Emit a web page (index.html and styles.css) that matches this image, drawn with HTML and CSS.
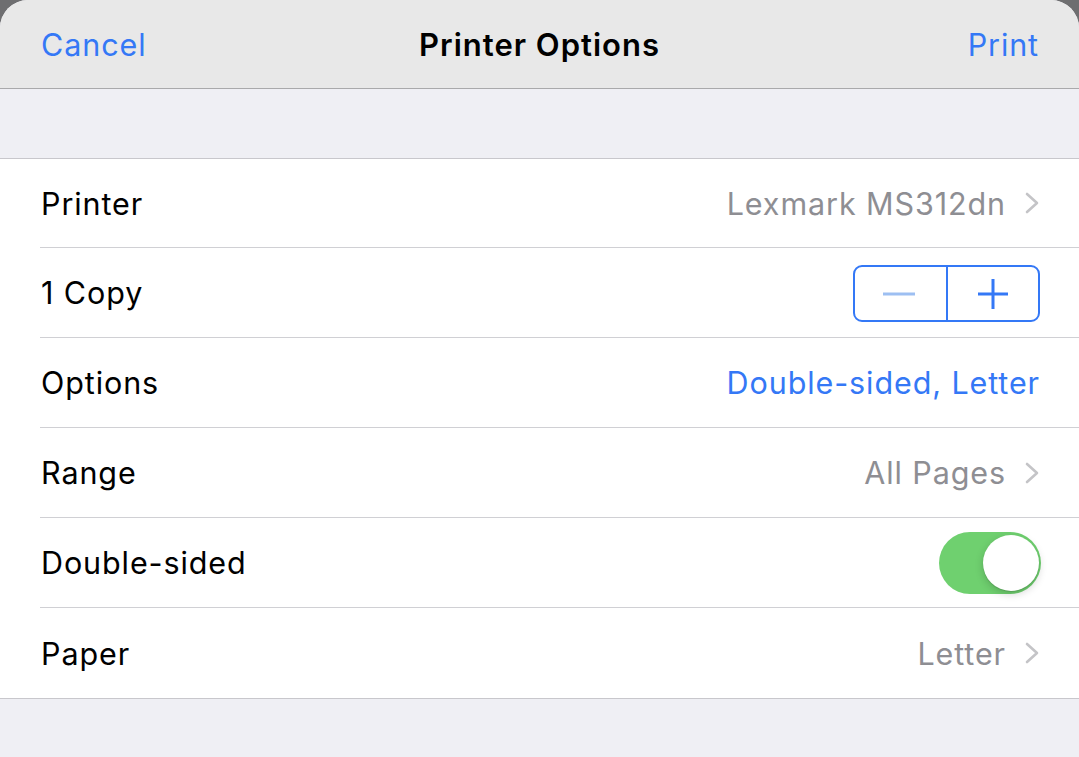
FILE: index.html
```html
<!DOCTYPE html>
<html>
<head>
<meta charset="utf-8">
<link rel="stylesheet" href="styles.css">
</head>
<body>
<div class="sheet">
  <header class="navbar">
    <span class="nav-btn">Cancel</span>
    <span class="nav-title">Printer Options</span>
    <span class="nav-btn">Print</span>
  </header>
  <div class="spacer"></div>
  <ul class="list">
    <li class="row first">
      <span class="label">Printer</span>
      <span class="detail">Lexmark MS312dn<svg class="chev" width="16" height="24" viewBox="0 0 16 24"><path d="M3 3 L13 12 L3 21" fill="none" stroke="#c4c4c7" stroke-width="2.6" stroke-linecap="round" stroke-linejoin="round"/></svg></span>
    </li>
    <li class="row">
      <span class="label">1 Copy</span>
      <div class="stepper">
        <span class="step"><svg width="34" height="4" viewBox="0 0 34 4"><rect x="0" y="0.5" width="32" height="3" fill="#9dbff2"/></svg></span>
        <span class="step step-right"><svg width="32" height="32" viewBox="0 0 32 32"><path d="M16 1 V31 M1 16 H31" stroke="#3478f6" stroke-width="3"/></svg></span>
      </div>
    </li>
    <li class="row">
      <span class="label">Options</span>
      <span class="detail link">Double-sided, Letter</span>
    </li>
    <li class="row">
      <span class="label">Range</span>
      <span class="detail">All Pages<svg class="chev" width="16" height="24" viewBox="0 0 16 24"><path d="M3 3 L13 12 L3 21" fill="none" stroke="#c4c4c7" stroke-width="2.6" stroke-linecap="round" stroke-linejoin="round"/></svg></span>
    </li>
    <li class="row">
      <span class="label">Double-sided</span>
      <span class="toggle"><span class="knob"></span></span>
    </li>
    <li class="row last">
      <span class="label">Paper</span>
      <span class="detail">Letter<svg class="chev" width="16" height="24" viewBox="0 0 16 24"><path d="M3 3 L13 12 L3 21" fill="none" stroke="#c4c4c7" stroke-width="2.6" stroke-linecap="round" stroke-linejoin="round"/></svg></span>
    </li>
  </ul>
  <div class="footer"></div>
</div>
</body>
</html>
```
FILE: styles.css
```css
* { box-sizing: border-box; }
html, body {
  margin: 0;
  padding: 0;
  background: #6e6e70;
  width: 1079px;
  height: 757px;
  overflow: hidden;
}
body {
  font-family: Inter, "Open Sans", "Liberation Sans", sans-serif;
  -webkit-font-smoothing: antialiased;
}
.sheet {
  width: 1079px;
  height: 757px;
  background: #efeff4;
  border-radius: 28px 28px 0 0;
  overflow: hidden;
  display: flex;
  flex-direction: column;
}
.navbar {
  height: 89px;
  background: #e8e8e8;
  border-bottom: 1px solid #a9a9ab;
  display: flex;
  align-items: center;
  justify-content: space-between;
  padding: 0 40px 0 41px;
  position: relative;
}
.nav-btn {
  color: #3478f6;
  font-size: 30.5px;
  letter-spacing: 0.9px;
}
.nav-title {
  position: absolute;
  left: 0;
  right: 0;
  text-align: center;
  font-size: 31px;
  letter-spacing: 1px;
  font-weight: 600;
  color: #000;
  pointer-events: none;
}
.spacer {
  height: 70px;
  border-bottom: 1px solid #c8c7cc;
}
.list {
  list-style: none;
  margin: 0;
  padding: 0 0 0 40px;
  background: #fff;
  border-bottom: 1px solid #c8c7cc;
}
.row {
  height: 90px;
  display: flex;
  align-items: center;
  justify-content: space-between;
  padding: 0 39px 0 1px;
  border-bottom: 1px solid #d0d0d4;
  font-size: 30.5px;
  letter-spacing: 0.9px;
  color: #000;
}
.row.first { height: 89px; }
.row.last { border-bottom: none; }
.detail {
  color: #8e8e93;
  display: flex;
  align-items: center;
}
.detail.link { color: #3478f6; }
.chev { margin-left: 18px; margin-right: 0; }
.stepper {
  width: 187px;
  height: 57px;
  border: 2px solid #3478f6;
  border-radius: 9px;
  display: flex;
  margin-top: 2px;
}
.step {
  flex: 1;
  display: flex;
  align-items: center;
  justify-content: center;
}
.step-right { border-left: 2px solid #3478f6; }
.toggle {
  width: 102px;
  height: 62px;
  border-radius: 31px;
  background: #6fd06f;
  position: relative;
  margin-right: -1px;
}
.knob {
  position: absolute;
  right: 2px;
  top: 3px;
  width: 56px;
  height: 56px;
  border-radius: 50%;
  background: #fff;
  box-shadow: 0 3px 8px rgba(0,0,0,0.18), 0 1px 1px rgba(0,0,0,0.12);
}
.footer { flex: 1; }
```
